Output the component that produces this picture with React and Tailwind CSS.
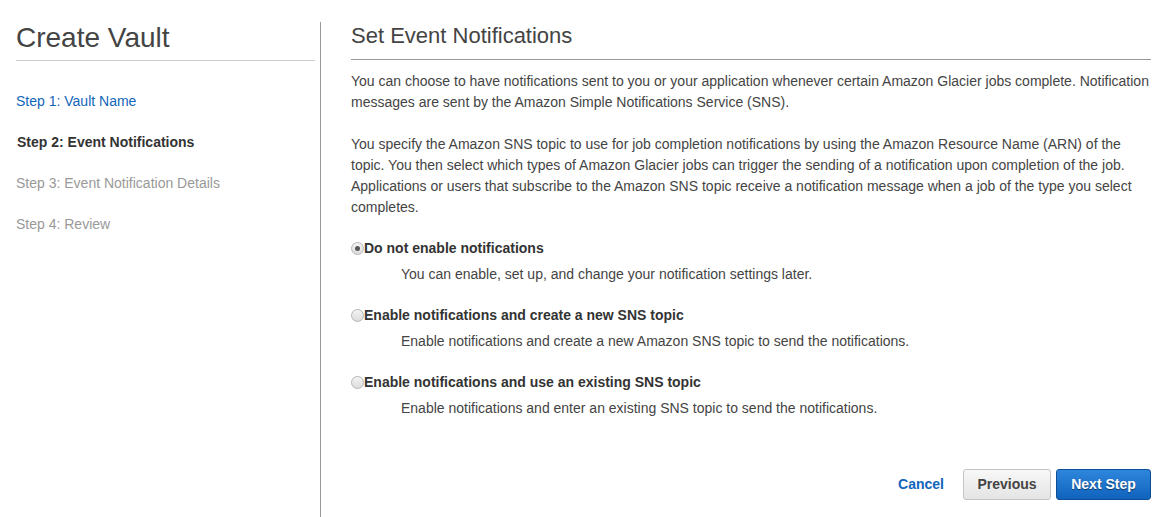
import React, { useState } from 'react';

const steps = [
    { label: 'Step 1: Vault Name', state: 'done' },
    { label: 'Step 2: Event Notifications', state: 'active' },
    { label: 'Step 3: Event Notification Details', state: 'todo' },
    { label: 'Step 4: Review', state: 'todo' },
];

const options = [
    {
        id: 'none',
        title: 'Do not enable notifications',
        help: 'You can enable, set up, and change your notification settings later.',
    },
    {
        id: 'new',
        title: 'Enable notifications and create a new SNS topic',
        help: 'Enable notifications and create a new Amazon SNS topic to send the notifications.',
    },
    {
        id: 'existing',
        title: 'Enable notifications and use an existing SNS topic',
        help: 'Enable notifications and enter an existing SNS topic to send the notifications.',
    },
];

const Radio = ({ checked }) => (
    <span className="w-[13px] h-[13px] rounded-full border border-[#b5b5b5] bg-gradient-to-b from-[#f4f4f4] to-[#dcdcdc] flex items-center justify-center shrink-0">
        {checked && <span className="w-[5px] h-[5px] rounded-full bg-[#555]" />}
    </span>
);

const App = () => {
    const [choice, setChoice] = useState('none');

    return (
        <div className="min-h-[517px] bg-white flex pt-[22px] text-[14px] text-[#444] font-['Liberation_Sans',Arial,sans-serif]">
            {/* Wizard steps */}
            <div className="ml-4 w-[305px] border-r border-[#999] pr-[5px]">
                <h1 className="text-[28px] leading-[32px] text-[#444] pb-[6px] border-b border-[#ccc]">Create Vault</h1>
                <ul className="mt-[32px] flex flex-col gap-[25px] leading-[16px]">
                    {steps.map((step) => (
                        <li
                            key={step.label}
                            className={
                                step.state === 'done'
                                    ? 'text-[#1166bb]'
                                    : step.state === 'active'
                                    ? 'font-bold text-[#333] pl-[1px]'
                                    : 'text-[#999]'
                            }
                        >
                            {step.label}
                        </li>
                    ))}
                </ul>
            </div>

            {/* Main panel */}
            <div className="pl-[30px] w-[830px] flex flex-col">
                <h2 className="text-[22px] leading-[26px] text-[#444] pt-[1px] pb-[10px] border-b border-[#999]">
                    Set Event Notifications
                </h2>
                <div className="mt-[11px] leading-[21px] flex flex-col gap-[21px]">
                    <p>
                        You can choose to have notifications sent to you or your application whenever certain Amazon Glacier jobs complete. Notification messages are sent by the Amazon Simple Notifications Service (SNS).
                    </p>
                    <p>
                        You specify the Amazon SNS topic to use for job completion notifications by using the Amazon Resource Name (ARN) of the topic. You then select which types of Amazon Glacier jobs can trigger the sending of a notification upon completion of the job. Applications or users that subscribe to the Amazon SNS topic receive a notification message when a job of the type you select completes.
                    </p>
                </div>

                <div className="mt-[23px] flex flex-col gap-[24px]">
                    {options.map((opt) => (
                        <div key={opt.id} className="cursor-pointer" onClick={() => setChoice(opt.id)}>
                            <div className="flex items-center h-[20px] -mt-[3px]">
                                <Radio checked={choice === opt.id} />
                                <span className="font-bold text-[#333]">{opt.title}</span>
                            </div>
                            <p className="pl-[50px] mt-[6px] leading-[20px]">{opt.help}</p>
                        </div>
                    ))}
                </div>

                <div className="mt-[51px] flex items-center justify-end">
                    <button className="text-[#1166bb] font-bold mr-[19px]">Cancel</button>
                    <button className="w-[88px] h-[31px] rounded-[3px] border border-[#c4c4c4] bg-gradient-to-b from-[#f8f8f8] to-[#e4e4e4] font-bold text-[#444]">
                        Previous
                    </button>
                    <button className="ml-[5px] w-[95px] h-[31px] rounded-[3px] border border-[#0d4f94] bg-gradient-to-b from-[#2e86dc] to-[#0f63bd] font-bold text-white [text-shadow:0_1px_1px_rgba(0,0,0,0.5)]">
                        Next Step
                    </button>
                </div>
            </div>
        </div>
    );
};

export default App;
